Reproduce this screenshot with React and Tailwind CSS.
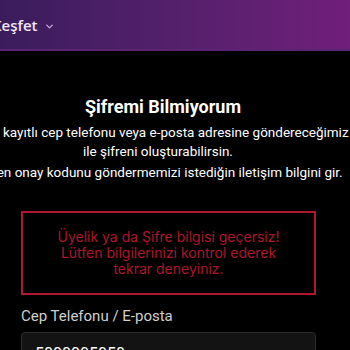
import React from "react";
import { ChevronDown } from "lucide-react";

const App = () => {
  return (
    <div className="w-[350px] h-[350px] overflow-hidden bg-black font-['Roboto',sans-serif]">
      <header className="h-[51px] bg-gradient-to-r from-[#3a1c5c] via-[#54206c] to-[#701f7a] border-b-2 border-[#5a2374] flex items-center">
        <nav className="flex items-center ml-[-8px] mt-[1px] text-[15px] font-semibold text-[#f1e6f7] font-['Open_Sans',sans-serif]">
          <span>Keşfet</span>
          <ChevronDown size={11} strokeWidth={3} className="ml-[6px] mt-[3px] text-[#c9a4dc]" />
        </nav>
      </header>

      <main className="pt-[42px]">
        <div className="w-[440px] ml-[-62px] text-center text-white">
          <h1 className="pl-[10px] text-[18px] leading-[28px] font-bold">Şifremi Bilmiyorum</h1>
          <p className="mt-[2px] text-[13.5px] leading-[19px] whitespace-nowrap">
            Sistemde kayıtlı cep telefonu veya e-posta adresine göndereceğimiz link
            <br />
            ile şifreni oluşturabilirsin.
          </p>
          <p className="mt-[2px] text-[13.5px] leading-[19px] whitespace-nowrap">
            Lütfen onay kodunu göndermemizi istediğin iletişim bilgini gir.
          </p>
        </div>

        <div className="ml-[21px] w-[295px]">
          <div className="mt-[29px] h-[84px] border-2 border-[#b0172e] flex items-center justify-center text-center">
            <p className="text-[14px] leading-[16px] text-[#ad162c] font-['Inter',sans-serif] px-4">
              Üyelik ya da Şifre bilgisi geçersiz!
              <br />
              Lütfen bilgilerinizi kontrol ederek
              <br />
              tekrar deneyiniz.
            </p>
          </div>

          <label className="block mt-[11px] text-[15px] leading-[20px] text-[#cfcfcf]">
            Cep Telefonu / E-posta
          </label>
          <div className="mt-[6px] h-[44px] rounded-[4px] border border-[#2b2b2b] bg-[#131313] px-[13px] pt-[9px] text-[16px] text-white">
            5000005050
          </div>
        </div>
      </main>
    </div>
  );
};

export default App;
